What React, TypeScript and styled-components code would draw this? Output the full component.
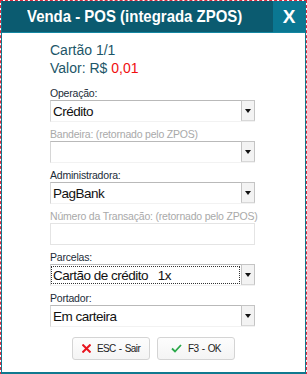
import React from "react";
import styled, { createGlobalStyle } from "styled-components";

const Global = createGlobalStyle`
  html, body { margin: 0; padding: 0; background: #ffffff; }
  body { font-family: "Liberation Sans", Arial, sans-serif; }
  * { box-sizing: border-box; }
`;

const Frame = styled.div`
  width: 307px;
  height: 375px;
  border: 1px dashed #d92a3f;
  background: #ffffff;
  overflow: hidden;
`;

const Window = styled.div`
  height: 100%;
  border-left: 1px solid #10798f;
  border-right: 1px solid #10798f;
  border-bottom: 2px solid #10798f;
  display: flex;
  flex-direction: column;
`;

const TitleBar = styled.div`
  height: 32px;
  display: flex;
  background: #0b5b70;
  border-bottom: 1px solid #1487a2;
`;

const Title = styled.div`
  flex: 1;
  display: flex;
  align-items: center;
  padding-left: 25px;
  overflow: hidden;
`;

const TitleText = styled.span`
  display: inline-block;
  color: #ffffff;
  font-family: "Liberation Sans", Arial, sans-serif;
  font-weight: bold;
  font-size: 17px;
  white-space: nowrap;
  transform: scaleX(0.88);
  transform-origin: left center;
`;

const CloseButton = styled.div`
  width: 32px;
  display: flex;
  align-items: center;
  justify-content: center;
  background: #0a7792;
  color: #ffffff;
  font-family: "Liberation Sans", sans-serif;
  font-weight: bold;
  font-size: 19px;
`;

const Content = styled.div`
  padding: 8px 0 0 48px;
  display: flex;
  flex-direction: column;
  width: 253px;
`;

const Info = styled.div`
  font-size: 14px;
  line-height: 18px;
  color: #1d5668;
`;

const Red = styled.span`
  color: #f01010;
`;

const Fields = styled.div`
  margin-top: 10px;
  display: flex;
  flex-direction: column;
  gap: 6px;
`;

const Field = styled.div`
  display: flex;
  flex-direction: column;
`;

const Label = styled.div<{ $disabled?: boolean }>`
  font-size: 10.5px;
  line-height: 13px;
  letter-spacing: -0.2px;
  color: ${(p) => (p.$disabled ? "#a9a9a9" : "#1b2c38")};
  white-space: nowrap;
`;

const Box = styled.div`
  height: 22px;
  display: flex;
  border-top: 1px solid #b9b9b9;
  border-left: 1px solid #d6d6d6;
  border-bottom: 1px solid #f2f2f2;
  background: #ffffff;
`;

const PlainBox = styled.div`
  height: 22px;
  border: 1px solid #e4e4e4;
  background: #ffffff;
`;

const Value = styled.div<{ $focus?: boolean }>`
  flex: 1;
  display: flex;
  align-items: center;
  padding-left: 1px;
  margin: 1px 1px 1px 0;
  font-size: 13.5px;
  letter-spacing: -0.5px;
  color: #111111;
  white-space: pre;
  border: 1px ${(p) => (p.$focus ? "dotted #333333" : "solid transparent")};
`;

const Arrow = styled.div`
  width: 14px;
  display: flex;
  align-items: center;
  justify-content: center;
  background: #f3f3f3;
  border: 1px solid #c4c4c4;
  border-bottom-color: #d8d8d8;
  margin-top: -1px;
  &::after {
    content: "";
    border-left: 3px solid transparent;
    border-right: 3px solid transparent;
    border-top: 4px solid #111111;
  }
`;

const Buttons = styled.div`
  display: flex;
  gap: 7px;
  padding-left: 22px;
  margin-top: 10px;
`;

const Button = styled.div`
  width: 78px;
  height: 23px;
  display: flex;
  align-items: center;
  justify-content: center;
  gap: 6px;
  border: 1px solid #d4d4d4;
  border-radius: 3px;
  background: linear-gradient(#fdfdfd, #f4f4f4);
  font-size: 10px;
  color: #222222;
  letter-spacing: -0.6px;
  word-spacing: 1px;
`;

const Select = ({ value, focus }: { value: string; focus?: boolean }) => (
  <Box>
    <Value $focus={focus}>{value}</Value>
    <Arrow />
  </Box>
);

export default function App() {
  return (
    <>
      <Global />
      <Frame>
        <Window>
          <TitleBar>
            <Title>
              <TitleText>Venda - POS (integrada ZPOS)</TitleText>
            </Title>
            <CloseButton>X</CloseButton>
          </TitleBar>
          <Content>
            <Info>Cartão 1/1</Info>
            <Info>
              Valor: R$ <Red>0,01</Red>
            </Info>
            <Fields>
              <Field>
                <Label>Operação:</Label>
                <Select value="Crédito" />
              </Field>
              <Field>
                <Label $disabled>Bandeira: (retornado pelo ZPOS)</Label>
                <Select value="" />
              </Field>
              <Field>
                <Label>Administradora:</Label>
                <Select value="PagBank" />
              </Field>
              <Field>
                <Label $disabled>Número da Transação: (retornado pelo ZPOS)</Label>
                <PlainBox />
              </Field>
              <Field>
                <Label>Parcelas:</Label>
                <Select value="Cartão de crédito   1x" focus />
              </Field>
              <Field>
                <Label>Portador:</Label>
                <Select value="Em carteira" />
              </Field>
            </Fields>
            <Buttons>
              <Button>
                <svg width="9" height="9" viewBox="0 0 9 9">
                  <path d="M1.2 1.2 L7.8 7.8 M7.8 1.2 L1.2 7.8" stroke="#e8141e" strokeWidth="2" strokeLinecap="square" />
                </svg>
                ESC - Sair
              </Button>
              <Button>
                <svg width="11" height="9" viewBox="0 0 11 9">
                  <path d="M1 4.5 L4 7.5 L10 1" stroke="#2aa84a" strokeWidth="1.8" fill="none" />
                </svg>
                F3 - OK
              </Button>
            </Buttons>
          </Content>
        </Window>
      </Frame>
    </>
  );
}
